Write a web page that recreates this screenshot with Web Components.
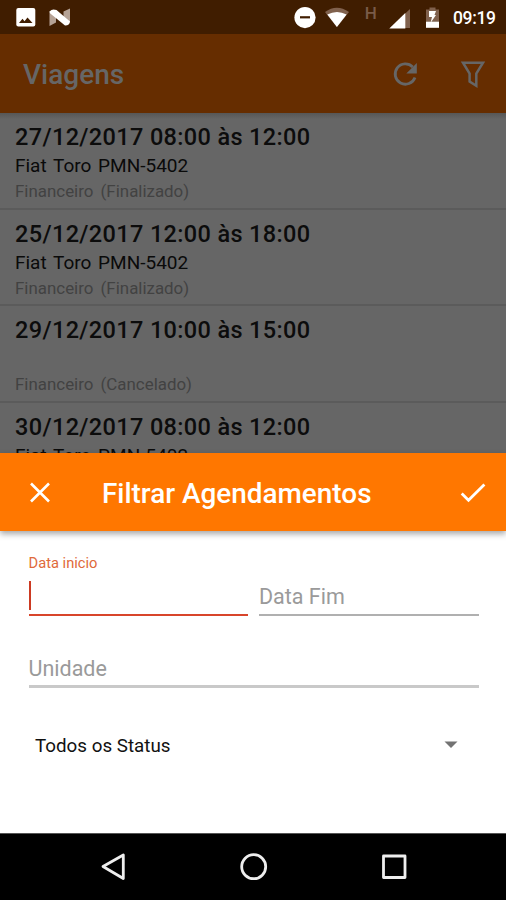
<!DOCTYPE html>
<html lang="pt-BR">
<head>
<meta charset="utf-8">
<title>Viagens</title>
<style>
	html, body
	{
		margin: 0;
		height: 900px;
		overflow: hidden;
		font-family: Roboto, sans-serif;
	}

	body
	{
		display: flex;
		flex-direction: column;
		background: #000;
	}
</style>
</head>
<body>
<status-bar time="09:19"></status-bar>
<app-bar title-text="Viagens"></app-bar>
<trip-list>
	<trip-item when="27/12/2017 08:00 às 12:00" car="Fiat Toro PMN-5402">Financeiro (Finalizado)</trip-item>
	<trip-item when="25/12/2017 12:00 às 18:00" car="Fiat Toro PMN-5402">Financeiro (Finalizado)</trip-item>
	<trip-item when="29/12/2017 10:00 às 15:00" car="">Financeiro (Cancelado)</trip-item>
	<trip-item when="30/12/2017 08:00 às 12:00" car="Fiat Toro PMN-5402"></trip-item>
</trip-list>
<filter-sheet>
	<span slot="title">Filtrar Agendamentos</span>
	<text-field active>Data inicio</text-field>
	<text-field>Data Fim</text-field>
	<text-field wide>Unidade</text-field>
	<select-field>Todos os Status</select-field>
</filter-sheet>
<nav-bar></nav-bar>

<script>
function define(name, html, setup)
{
	const template = document.createElement("template");
	template.innerHTML = html;

	window.customElements.define(name, class extends HTMLElement
	{
		constructor()
		{
			super();
			this.attachShadow({ mode: "open" });
			this.shadowRoot.appendChild(template.content.cloneNode(true));
			if (setup) setup(this, this.shadowRoot);
		}
	});
}

define("status-bar", `
	<style>
		:host
		{
			display: flex;
			flex: none;
			height: 34px;
			background: #401d00;
			color: #fff;
		}

		svg
		{
			flex: none;
			width: 449px;
			height: 34px;
		}

		.time
		{
			font-size: 17.5px;
			font-weight: 500;
			line-height: 36px;
			margin-left: 4px;
			letter-spacing: -0.35px;
		}
	</style>

	<svg viewBox="0 0 449 34">
		<!-- picture -->
		<rect x="16.3" y="8" width="19" height="18.6" rx="2" fill="#fff"/>
		<path d="M19 23l3.5-4.200 2 2.400 3-3.700 5 5.500z" fill="#401d00"/>
		<!-- android n -->
		<path d="M49.500 11l6.500 3v8.500l-6.500 3.500zM63.500 11.500l6.500-3v14l-6.500-3z" fill="#b5a295"/>
		<path d="M49.600 11.400Q52 8.500 56.500 10L70 21.500Q69.500 25.800 65 25.600L50 13.300z" fill="#fff"/>
		<!-- do not disturb -->
		<circle cx="305" cy="17.6" r="10.6" fill="#fff"/>
		<rect x="300" y="16.2" width="10" height="2.2" fill="#401d00"/>
		<!-- wifi -->
		<path d="M325 12Q336.700 3.500 349 12L336.900 27z" fill="#80614d"/>
		<path d="M327.300 14.500Q337 9.500 346.600 14.500L336.900 27z" fill="#fff"/>
		<!-- signal -->
		<path d="M410 9v19h-20z" fill="#80614d"/>
		<path d="M405.300 13v15.500h-16z" fill="#fff"/>
		<!-- battery -->
		<path d="M429.500 7.500h6v2h3.500V21h-13V9.500h3.500z" fill="#80614d"/>
		<path d="M426 21.500h13v6.300h-13z" fill="#fff"/>
		<path d="M429 11h7l-1.500 4h1.500l-5.500 8 1.500-6h-3z" fill="#fff"/>
		<text x="364.700" y="19" font-size="17" font-weight="500" fill="#795b48">H</text>
	</svg>
	<span class="time"></span>
`, (host, root) =>
{
	root.querySelector(".time").textContent = host.getAttribute("time");
});

define("app-bar", `
	<style>
		:host
		{
			display: flex;
			flex: none;
			align-items: center;
			height: 79px;
			box-sizing: border-box;
			padding: 0 17px 0 23px;
			background: #662d00;
			color: #666;
		}

		.title
		{
			flex: 1;
			font-size: 28px;
			font-weight: 500;
			padding-top: 1px;
		}

		svg
		{
			width: 32px;
			height: 32px;
		}

		.refresh
		{
			margin-right: 36px;
		}
	</style>

	<div class="title"></div>
	<svg class="refresh" viewBox="0 0 32 32" fill="none" stroke="#666" stroke-width="2.8">
		<path d="M26 19.500A10.200 10.200 0 1 1 23.700 8.900"/>
		<path d="M27.800 5v10.500h-10.500z" fill="#666" stroke="none"/>
	</svg>
	<svg viewBox="0 0 32 32" fill="none" stroke="#666" stroke-width="2.500">
		<path d="M6 4.700h20L19.300 15.500v12.300L12.600 23.500v-8z"/>
	</svg>
`, (host, root) =>
{
	root.querySelector(".title").textContent = host.getAttribute("title-text");
});

define("trip-list", `
	<style>
		:host
		{
			display: block;
			flex: none;
			height: 340px;
			overflow: hidden;
			background: linear-gradient(#575757, #666 6px);
		}
	</style>

	<slot></slot>
`);

define("trip-item", `
	<style>
		:host
		{
			display: block;
			height: 96.5px;
			box-sizing: border-box;
			padding: 9px 15px 0;
			border-bottom: 2px solid #5b5b5b;
			white-space: nowrap;
		}

		.when
		{
			height: 30px;
			line-height: 30px;
			font-size: 23.500px;
			font-weight: 500;
			letter-spacing: 0.35px;
			color: #0c0c0c;
		}

		.car
		{
			height: 28px;
			line-height: 28px;
			font-size: 19px;
			word-spacing: 2px;
			color: #0a0a0a;
		}

		.state
		{
			line-height: 22px;
			font-size: 16.900px;
			word-spacing: 3px;
			color: #424242;
		}
	</style>

	<div class="when"></div>
	<div class="car"></div>
	<div class="state"><slot></slot></div>
`, (host, root) =>
{
	root.querySelector(".when").textContent = host.getAttribute("when");
	root.querySelector(".car").textContent = host.getAttribute("car");
});

define("filter-sheet", `
	<style>
		:host
		{
			display: flex;
			flex-direction: column;
			flex: none;
			height: 380px;
			background: #fff;
		}

		header
		{
			display: flex;
			flex: none;
			align-items: center;
			height: 78px;
			box-sizing: border-box;
			padding: 2px 17px 0 24px;
			background: #ff7700;
			box-shadow: 0 3px 6px rgba(0, 0, 0, 0.35);
			color: #fff;
		}

		svg
		{
			width: 32px;
			height: 32px;
		}

		.title
		{
			flex: 1;
			margin-left: 46px;
			font-size: 27.900px;
			font-weight: 500;
		}

		.fields
		{
			display: grid;
			grid-template-columns: 219.500px 219.500px;
			column-gap: 11px;
			padding: 20px 28px 0 28.500px;
		}
	</style>

	<header>
		<svg viewBox="0 0 32 32" fill="none" stroke="#fff" stroke-width="2.600">
			<path d="M7 6.500l18 18M25 6.500l-18 18"/>
		</svg>
		<div class="title"><slot name="title"></slot></div>
		<svg viewBox="0 0 32 32" fill="none" stroke="#fff" stroke-width="2.800">
			<path d="M4.700 16.500l6.800 6.700L27.400 7.500"/>
		</svg>
	</header>
	<div class="fields"><slot></slot></div>
`);

define("text-field", `
	<style>
		:host
		{
			display: flex;
			flex-direction: column;
			height: 65px;
			box-sizing: border-box;
			padding-top: 29px;
			border-bottom: 2px solid #b0b0b0;
			font-size: 21.500px;
			line-height: 34px;
			color: #9a9a9a;
		}

		:host([active])
		{
			padding-top: 0;
			font-size: 14.700px;
			line-height: 24px;
			color: #e0693a;
			border-color: #d8452b;
		}

		:host([wide])
		{
			grid-column: 1 / 3;
			height: 72px;
			padding-top: 36px;
			border-bottom: 3px solid #c9c9c9;
		}

		.caret
		{
			display: none;
			width: 2.500px;
			height: 29px;
			margin-top: 6px;
			background: #cc3a22;
		}

		:host([active]) .caret
		{
			display: block;
		}
	</style>

	<label><slot></slot></label>
	<span class="caret"></span>
`);

define("select-field", `
	<style>
		:host
		{
			display: flex;
			grid-column: 1 / 3;
			align-items: center;
			justify-content: space-between;
			height: 40px;
			margin-top: 38px;
			padding: 0 21px 0 6.500px;
			font-size: 18.800px;
			color: #111;
		}

		svg
		{
			width: 14px;
			height: 8px;
			margin-bottom: 2px;
		}
	</style>

	<span><slot></slot></span>
	<svg viewBox="0 0 14 8"><path d="M.5 .5h13L7 7z" fill="#737373"/></svg>
`);

define("nav-bar", `
	<style>
		:host
		{
			display: flex;
			flex: none;
			align-items: center;
			justify-content: space-between;
			height: 67px;
			box-sizing: border-box;
			padding: 0 96px 0 98px;
			border-top: 1px solid #555;
			background: #000;
		}

		svg
		{
			width: 32px;
			height: 32px;
		}
	</style>

	<svg viewBox="0 0 32 32" fill="none" stroke="#eee" stroke-width="2.800" stroke-linejoin="round">
		<path d="M25.300 4v23.500L5 15.500z"/>
	</svg>
	<svg viewBox="0 0 32 32" fill="none" stroke="#eee" stroke-width="2.800">
		<circle cx="15.700" cy="15.700" r="12"/>
	</svg>
	<svg viewBox="0 0 32 32" fill="none" stroke="#eee" stroke-width="2.800" stroke-linejoin="round">
		<path d="M5.500 5h21.500v21.500h-21.500z"/>
	</svg>
`);
</script>
</body>
</html>
